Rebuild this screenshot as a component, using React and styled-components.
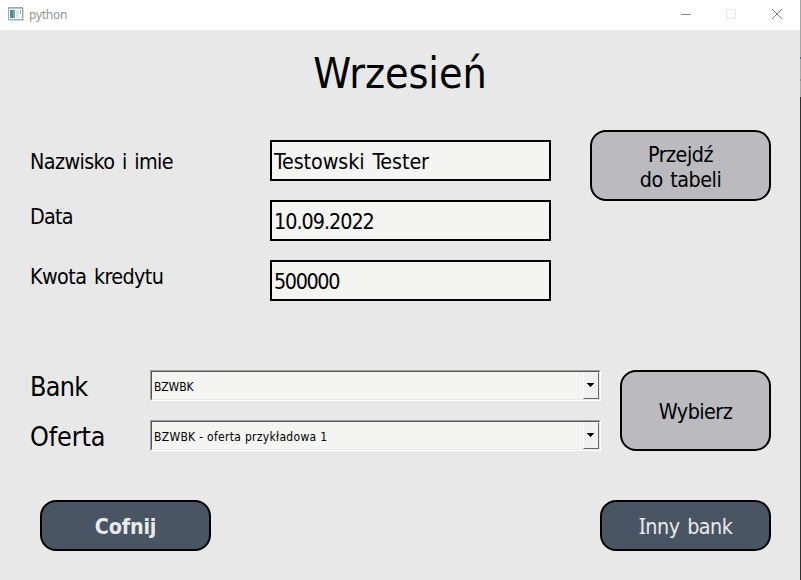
import React from "react";
import styled, { createGlobalStyle } from "styled-components";

const GlobalStyle = createGlobalStyle`
  * { box-sizing: border-box; }
  body { margin: 0; background: #e8e8e8; overflow: hidden; }
`;

const Screen = styled.div`
  display: grid;
  grid-template-columns: 800px 1px;
  width: 801px;
  height: 580px;
  font-family: "DejaVu Sans Condensed", "DejaVu Sans", sans-serif;
  color: #000;
`;

const Backdrop = styled.div`
  background: linear-gradient(
    #a6a6a6 0 57px,
    #2f6fad 57px 59px,
    #a6a6a6 59px 79px,
    #8c8c8c 79px 81px,
    #a6a6a6 81px 97px,
    #303030 97px
  );
`;

const AppWindow = styled.main`
  display: flex;
  flex-direction: column;
  background: #e8e8e8;
`;

const TitleBar = styled.header`
  display: flex;
  align-items: center;
  height: 30px;
  padding: 0 17px 0 8px;
  background: #fff;
`;

const WindowName = styled.span`
  flex: 1;
  margin-left: 5px;
  font: 12px/30px "Noto Sans", sans-serif;
  letter-spacing: -0.25px;
  color: #949494;
`;

const WindowControls = styled.div`
  display: flex;
  gap: 33px;
  padding-bottom: 2px;
  svg { display: block; }
`;

const Heading = styled.h1`
  height: 110px;
  margin: 0;
  padding-top: 13px;
  text-align: center;
  font-size: 42.67px;
  font-weight: 400;
  line-height: 60px;
  letter-spacing: -0.1px;
`;

const TopSection = styled.section`
  display: grid;
  grid-template-columns: 521px 181px;
  column-gap: 39px;
  align-items: start;
  height: 230px;
  padding-left: 30px;
`;

const FieldList = styled.div`
  display: grid;
  row-gap: 19px;
`;

const FieldRow = styled.label`
  display: grid;
  grid-template-columns: 240px 281px;
`;

const FieldLabel = styled.span`
  height: 41px;
  padding-top: ${(p) => 9 - (p.$lift || 0)}px;
  font-size: 21.33px;
  line-height: 26px;
  letter-spacing: ${(p) => p.$tracking}px;
  word-spacing: 2px;
`;

const FieldValue = styled.span`
  height: 41px;
  padding: 7px 2px 0;
  border: 2px solid #000;
  background: #f4f4f2;
  font-size: 21.33px;
  line-height: 26px;
  letter-spacing: ${(p) => p.$tracking}px;
  word-spacing: 2px;
`;

const Button = styled.button`
  width: ${(p) => p.$width}px;
  height: ${(p) => p.$height}px;
  margin: 0;
  padding: 2px 0 0;
  border: 2px solid #000;
  border-radius: 16px;
  background: ${(p) => (p.$dark ? "#4a5564" : "#bbbabe")};
  color: ${(p) => (p.$dark ? "#e9eaec" : "#000")};
  font-family: inherit;
  font-size: 21.33px;
  font-weight: ${(p) => (p.$bold ? 700 : 400)};
  line-height: 25px;
  letter-spacing: ${(p) => p.$tracking}px;
  word-spacing: 2px;
  white-space: pre-line;
`;

const TableButton = styled(Button)`
  margin-top: -10px;
`;

const SerifCapital = styled.span`
  font-family: "Noto Sans", sans-serif;
  line-height: 1;
`;

const ChoiceSection = styled.section`
  display: grid;
  grid-template-columns: 571px 151px;
  column-gap: 19px;
  height: 130px;
  padding-left: 30px;
`;

const ChoiceList = styled.div`
  display: grid;
  grid-auto-rows: 31px;
  align-content: start;
  row-gap: 19px;
`;

const ChoiceRow = styled.div`
  display: grid;
  grid-template-columns: 120px 451px;
`;

const ChoiceLabel = styled.span`
  font-size: 26.67px;
  line-height: 34px;
  letter-spacing: ${(p) => p.$tracking}px;
`;

const Combo = styled.div`
  display: flex;
  height: 31px;
  border: 1px solid;
  border-color: #a0a0a0 #fff #fff #a0a0a0;
`;

const ComboInner = styled.div`
  display: flex;
  flex: 1;
  border: 1px solid;
  border-color: #555 #e8e8e8 #e8e8e8 #555;
  background: #f4f4f2;
`;

const ComboText = styled.span`
  flex: 1;
  padding-left: 2px;
  font-size: 12px;
  line-height: 30px;
  letter-spacing: ${(p) => p.$tracking}px;
`;

const ComboArrow = styled.span`
  width: 16px;
  height: 27px;
  padding: 10px 0 0 3px;
  border: 1px solid;
  border-color: #f4f4f4 #666 #666 #fafafa;
  background: #f0f0f0;
  svg { display: block; }
`;

const Footer = styled.footer`
  display: flex;
  justify-content: space-between;
  padding: 0 29px 0 40px;
`;

const AppIcon = () => (
  <svg width="16" height="16" viewBox="0 0 16 16" shapeRendering="crispEdges">
    <rect x=".5" y=".5" width="14" height="12" fill="#f7f9fa" stroke="#a0a8ae" />
    <path d="M1 1h13v1H1z" fill="#b5c3cb" />
    <path d="M2 3h5v8H2z" fill="#4b8c91" />
    <path d="M5 3h2v8H5z" fill="#76a5a5" />
    <path d="M8 3h3v8H8z" fill="#e1e5e6" />
    <path d="M12 3h1v4h-1z" fill="#98a9ad" />
    <path d="M15.5 1v12.500H1" fill="none" stroke="#d5d8da" />
  </svg>
);

const ControlIcon = ({ d, color, crisp }) => (
  <svg width="12" height="12" viewBox="0 0 12 12" fill="none" stroke={color} shapeRendering={crisp ? "crispEdges" : "auto"}>
    <path d={d} />
  </svg>
);

const Select = ({ value, tracking }) => (
  <Combo>
    <ComboInner>
      <ComboText $tracking={tracking}>{value}</ComboText>
      <ComboArrow>
        <svg width="7" height="4" viewBox="0 0 7 4" shapeRendering="crispEdges">
          <path d="M0 0h7v1H0zM1 1h5v1H1zM2 2h3v1H2zM3 3h1v1H3z" />
        </svg>
      </ComboArrow>
    </ComboInner>
  </Combo>
);

const fields = [
  { label: "Nazwisko i imie", value: "Testowski Tester", lift: 0, labelTracking: -0.6, tracking: -0.1 },
  { label: "Data", value: "10.09.2022", lift: 5, labelTracking: -0.73, tracking: -1 },
  { label: "Kwota kredytu", value: "500000", lift: 5, labelTracking: -0.58, tracking: -1.37 },
];

const choices = [
  { label: "Bank", value: "BZWBK", labelTracking: -0.7, tracking: -0.1 },
  { label: "Oferta", value: "BZWBK - oferta przykładowa 1", labelTracking: -0.1, tracking: 0.3 },
];

export default function App() {
  return (
    <Screen>
      <GlobalStyle />
      <AppWindow>
        <TitleBar>
          <AppIcon />
          <WindowName>python</WindowName>
          <WindowControls>
            <ControlIcon d="M0 6.5h10" color="#888" crisp />
            <ControlIcon d="M.5 1.500h9v9h-9z" color="#e8e8e8" crisp />
            <ControlIcon d="M1 1l10 10M11 1L1 11" color="#777" />
          </WindowControls>
        </TitleBar>
        <Heading>Wrzesień</Heading>
        <TopSection>
          <FieldList>
            {fields.map((f) => (
              <FieldRow key={f.label}>
                <FieldLabel $lift={f.lift} $tracking={f.labelTracking}>{f.label}</FieldLabel>
                <FieldValue $tracking={f.tracking}>{f.value}</FieldValue>
              </FieldRow>
            ))}
          </FieldList>
          <TableButton $width={181} $height={71} $tracking={-0.5}>{"Przejdź\ndo tabeli"}</TableButton>
        </TopSection>
        <ChoiceSection>
          <ChoiceList>
            {choices.map((c) => (
              <ChoiceRow key={c.label}>
                <ChoiceLabel $tracking={c.labelTracking}>{c.label}</ChoiceLabel>
                <Select value={c.value} tracking={c.tracking} />
              </ChoiceRow>
            ))}
          </ChoiceList>
          <Button $width={151} $height={81} $tracking={-0.55}>Wybierz</Button>
        </ChoiceSection>
        <Footer>
          <Button $dark $bold $width={171} $height={51} $tracking={-0.14}>Cofnij</Button>
          <Button $dark $width={171} $height={51} $tracking={-0.5}>
            <SerifCapital>I</SerifCapital>nny bank
          </Button>
        </Footer>
      </AppWindow>
      <Backdrop />
    </Screen>
  );
}
